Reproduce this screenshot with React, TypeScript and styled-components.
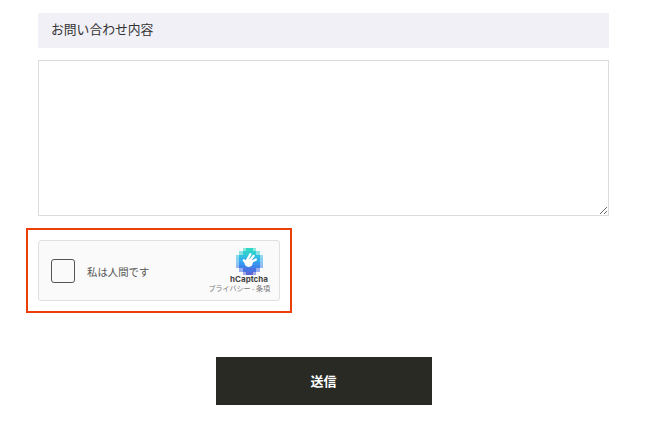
import React from 'react';
import styled, { createGlobalStyle } from 'styled-components';

const GlobalStyle = createGlobalStyle`
  html, body {
    margin: 0;
    padding: 0;
    background: #fff;
    font-family: "Liberation Sans", "Noto Sans CJK JP", sans-serif;
  }
`;

const Page = styled.div`
  width: 648px;
  height: 425px;
  box-sizing: border-box;
  padding: 13px 39px 0 38px;
  overflow: hidden;
`;

const Heading = styled.div`
  height: 35px;
  box-sizing: border-box;
  display: flex;
  align-items: center;
  padding: 0 0 5px 13px;
  background: #f1f0f7;
  color: #333;
  font-size: 12.8px;
  font-family: "Noto Sans CJK JP", sans-serif;
`;

const Message = styled.textarea`
  display: block;
  width: 100%;
  height: 156px;
  box-sizing: border-box;
  margin: 12px 0 0;
  border: 1px solid #dcdcdc;
  background: #fff;
  outline: none;
`;

const CaptchaFrame = styled.div`
  width: 266px;
  height: 85px;
  box-sizing: border-box;
  margin: 12px 0 0 -12px;
  padding: 10px;
  border: 2px solid #ea3f06;
`;

const Captcha = styled.div`
  width: 242px;
  height: 61px;
  box-sizing: border-box;
  display: flex;
  align-items: center;
  justify-content: space-between;
  padding: 0 9px 0 12px;
  background: #fafafa;
  border: 1px solid #e0e0e0;
  border-radius: 3px;
`;

const CheckArea = styled.div`
  display: flex;
  align-items: center;
  gap: 12px;
`;

const CheckBox = styled.div`
  width: 24px;
  height: 24px;
  box-sizing: border-box;
  background: #fafafa;
  border: 1px solid #555;
  border-radius: 3px;
`;

const CheckLabel = styled.span`
  padding-top: 1px;
  color: #555;
  font-size: 10.4px;
  font-family: "Noto Sans CJK JP", sans-serif;
`;

const Brand = styled.div`
  display: flex;
  flex-direction: column;
  align-items: flex-end;
  padding-bottom: 1px;
`;

const BrandMark = styled.div`
  width: 36px;
  margin-right: 3px;
  display: flex;
  flex-direction: column;
  align-items: center;
`;

const LogoSvg = styled.svg`
  display: block;
  filter: blur(0.35px);
`;

const BrandName = styled.div`
  color: #444;
  font-size: 8px;
  line-height: 9px;
  font-weight: 700;
  white-space: nowrap;
  font-family: "Inter", "Liberation Sans", sans-serif;
`;

const BrandLinks = styled.div`
  color: #777;
  font-size: 7px;
  line-height: 9px;
  white-space: nowrap;
  font-family: "Noto Sans CJK JP", sans-serif;
`;

const Actions = styled.div`
  display: flex;
  justify-content: center;
  margin: 44px 0 0;
`;

const Submit = styled.button`
  width: 216px;
  height: 48px;
  padding: 0 0 2px;
  border: none;
  background: #2a2a24;
  color: #fff;
  font-size: 13px;
  font-weight: 700;
  font-family: "Noto Sans CJK JP", sans-serif;
`;

// logo mosaic, row by row: first and last tile of each row
const rows: [number, number][] = [[2, 5], [1, 6], [0, 7], [0, 7], [0, 7], [0, 7], [1, 6], [2, 5]];

// teal at the top, through blue, to violet at the bottom
const rowColours = ['#2fd8c4', '#30cdd2', '#30bfe0', '#30adec', '#3498f0', '#3f84ea', '#4a72e0', '#5c68d6'];

function HCaptchaLogo() {
  return (
    <LogoSvg width="27" height="27" viewBox="0 0 8 8" shapeRendering="crispEdges">
      {rows.map(([from, to], y) =>
        Array.from({ length: to - from + 1 }, (_, i) => {
          const x = from + i;
          const isEdge = x === from || x === to;
          return (
            <rect
              key={`${x}-${y}`}
              x={x}
              y={y}
              width="1.02"
              height="1.02"
              fill={rowColours[y]}
              opacity={isEdge ? 0.55 : 1}
            />
          );
        })
      )}
      <g shapeRendering="geometricPrecision" fill="none" stroke="#fff" strokeWidth="0.7" strokeLinecap="round">
        <path d="M3.3 3.6L4.25 1.85" />
        <path d="M4.1 3.7L5.2 2.35" />
        <path d="M4.7 4.1L5.9 3.4" />
        <path d="M3 4.5L2.3 3.65" />
        <circle cx="3.75" cy="4.4" r="0.95" fill="#fff" strokeWidth="0.5" />
      </g>
    </LogoSvg>
  );
}

export default function App() {
  return (
    <Page>
      <GlobalStyle />
      <Heading>お問い合わせ内容</Heading>
      <Message />
      <CaptchaFrame>
        <Captcha>
          <CheckArea>
            <CheckBox />
            <CheckLabel>私は人間です</CheckLabel>
          </CheckArea>
          <Brand>
            <BrandMark>
              <HCaptchaLogo />
              <BrandName>hCaptcha</BrandName>
            </BrandMark>
            <BrandLinks>プライバシー - 条項</BrandLinks>
          </Brand>
        </Captcha>
      </CaptchaFrame>
      <Actions>
        <Submit>送信</Submit>
      </Actions>
    </Page>
  );
}
